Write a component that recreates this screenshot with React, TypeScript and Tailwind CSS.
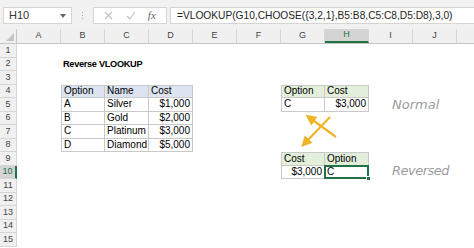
import React from 'react';

type Cell = { text: string; align?: 'left' | 'right'; bg?: string; bold?: boolean };

const COLS = ['A', 'B', 'C', 'D', 'E', 'F', 'G', 'H', 'I', 'J'];
const ROWS = Array.from({ length: 15 }, (_, i) => i + 1);

// cell contents, keyed by address
const cells: Record<string, Cell> = {
  B2: { text: 'Reverse VLOOKUP', bold: true },
  B4: { text: 'Option', bg: 'bg-[#dde4f1]' },
  C4: { text: 'Name', bg: 'bg-[#dde4f1]' },
  D4: { text: 'Cost', bg: 'bg-[#dde4f1]' },
  B5: { text: 'A' }, C5: { text: 'Silver' }, D5: { text: '$1,000', align: 'right' },
  B6: { text: 'B' }, C6: { text: 'Gold' }, D6: { text: '$2,000', align: 'right' },
  B7: { text: 'C' }, C7: { text: 'Platinum' }, D7: { text: '$3,000', align: 'right' },
  B8: { text: 'D' }, C8: { text: 'Diamond' }, D8: { text: '$5,000', align: 'right' },
  G4: { text: 'Option', bg: 'bg-[#e3efdb]' },
  H4: { text: 'Cost', bg: 'bg-[#e3efdb]' },
  G5: { text: 'C' }, H5: { text: '$3,000', align: 'right' },
  G9: { text: 'Cost', bg: 'bg-[#e3efdb]' },
  H9: { text: 'Option', bg: 'bg-[#e3efdb]' },
  G10: { text: '$3,000', align: 'right' }, H10: { text: 'C' },
};

// bordered ranges: [firstCol, lastCol, firstRow, lastRow]
const tables: [number, number, number, number][] = [
  [1, 3, 4, 8],
  [6, 7, 4, 5],
  [6, 7, 9, 10],
];

function borderFor(c: number, r: number) {
  for (const [c0, c1, r0, r1] of tables) {
    if (c >= c0 && c <= c1 && r >= r0 && r <= r1) {
      let cls = 'border-[#c9c9c9] border-r border-b';
      if (r === r0) cls += ' border-t';
      if (c === c0) cls += ' border-l';
      return cls;
    }
  }
  return '';
}

function FormulaBar() {
  return (
    <div className="h-[29px] bg-[#f1f1f1] flex items-start pt-[7px] pl-[3px] text-[11px] text-[#333]">
      <div className="w-[69px] h-[17px] bg-white border border-[#d5d5d5] flex items-center justify-between pl-[5px] pr-[5px]">
        <span>H10</span>
        <svg width="6" height="4" viewBox="0 0 6 4"><path d="M0 0h6L3 4z" fill="#666" /></svg>
      </div>
      <div className="w-[21px] h-[17px] flex flex-col items-center justify-center gap-[2px]">
        <span className="w-px h-px bg-[#aaa]" />
        <span className="w-px h-px bg-[#aaa]" />
        <span className="w-px h-px bg-[#aaa]" />
      </div>
      <div className="w-[74px] h-[17px] bg-white border border-[#d5d5d5] flex items-center justify-around px-[4px] text-[#b5b5b5]">
        <svg width="9" height="9" viewBox="0 0 9 9"><path d="M1 1l7 7M8 1L1 8" stroke="#c0c0c0" strokeWidth="1.1" /></svg>
        <svg width="10" height="9" viewBox="0 0 10 9"><path d="M1 5l3 3 5-7" stroke="#c0c0c0" strokeWidth="1.1" fill="none" /></svg>
        <span className="italic font-['Liberation_Serif'] text-[#666] text-[11px]">fx</span>
      </div>
      <div className="ml-[3px] flex-1 h-[17px] bg-white border border-[#d5d5d5] border-r-0 flex items-center pl-[6px] font-['Liberation_Sans'] text-[10.2px] text-[#222]">
        =VLOOKUP(G10,CHOOSE({'{'}3,2,1{'}'},B5:B8,C5:C8,D5:D8),3,0)
      </div>
    </div>
  );
}

export default function App() {
  return (
    <div className="relative w-[474px] h-[248px] overflow-hidden bg-white font-['Liberation_Sans'] select-none">
      <FormulaBar />
      {/* column headers */}
      <div className="flex h-[15px] bg-[#f0f0f0] border-b border-[#c6c6c6] text-[9px] text-[#444]">
        <div className="w-[17px] shrink-0 border-r border-[#c6c6c6] relative">
          <svg className="absolute right-[2px] bottom-[2px]" width="8" height="8" viewBox="0 0 8 8"><path d="M8 0v8H0z" fill="#c4c4c4" /></svg>
        </div>
        {COLS.map((c) => (
          <div
            key={c}
            className={`w-[44px] shrink-0 flex items-center justify-center border-r border-[#d6d6d6] ${c === 'H' ? 'bg-[#d4d4d4] border-b-2 border-b-[#217346] text-[#217346]' : ''}`}
          >
            {c}
          </div>
        ))}
        <div className="flex-1" />
      </div>
      {/* rows */}
      {ROWS.map((r) => (
        <div key={r} className="flex h-[13.5px]">
          <div className={`w-[17px] shrink-0 flex items-center justify-center text-[9px] border-r border-b border-[#d6d6d6] ${r === 10 ? 'bg-[#d4d4d4] text-[#217346] border-r-2 border-r-[#217346]' : 'bg-[#f0f0f0] text-[#444]'}`}>
            {r}
          </div>
          {COLS.map((c, ci) => {
            const addr = `${c}${r}`;
            const cell = cells[addr];
            const sel = addr === 'H10';
            return (
              <div
                key={addr}
                className={`w-[44px] shrink-0 relative flex items-center px-[2px] text-black leading-none whitespace-nowrap ${borderFor(ci, r)} ${cell?.bg ?? ''} ${cell?.align === 'right' ? 'justify-end' : ''} ${cell?.bold ? 'font-bold text-[9.2px] tracking-[-0.3px] overflow-visible' : 'text-[10px] overflow-hidden'} ${sel ? 'z-10 overflow-visible' : ''}`}
              >
                {cell?.text}
                {sel && (
                  <>
                    <div className="absolute -inset-px border-2 border-[#217346]" />
                    <div className="absolute -right-[3px] -bottom-[3px] w-[5px] h-[5px] bg-[#217346] border border-white" />
                  </>
                )}
              </div>
            );
          })}
          <div className="flex-1" />
        </div>
      ))}
      {/* hand-written notes floating over the sheet */}
      <span className="absolute left-[392px] top-[98px] italic text-[13px] leading-none text-[#9c9c9c] font-['DejaVu_Sans'] font-light">Normal</span>
      <span className="absolute left-[392px] top-[164px] italic text-[13px] leading-none text-[#9c9c9c] font-['DejaVu_Sans'] font-light tracking-[-0.5px]">Reversed</span>
      {/* swap arrows between the two lookup tables */}
      <svg className="absolute left-[298px] top-[113px]" width="44" height="36" viewBox="0 0 44 36">
        <defs>
          <marker id="ah" markerWidth="5" markerHeight="5" refX="2.5" refY="2.5" orient="auto">
            <path d="M0 0L5 2.5L0 5z" fill="#f0b429" />
          </marker>
        </defs>
        <path d="M38 24L12 5" stroke="#f0b429" strokeWidth="2.2" markerEnd="url(#ah)" />
        <path d="M32 4L7 30" stroke="#f0b429" strokeWidth="2.2" markerEnd="url(#ah)" />
      </svg>
    </div>
  );
}
